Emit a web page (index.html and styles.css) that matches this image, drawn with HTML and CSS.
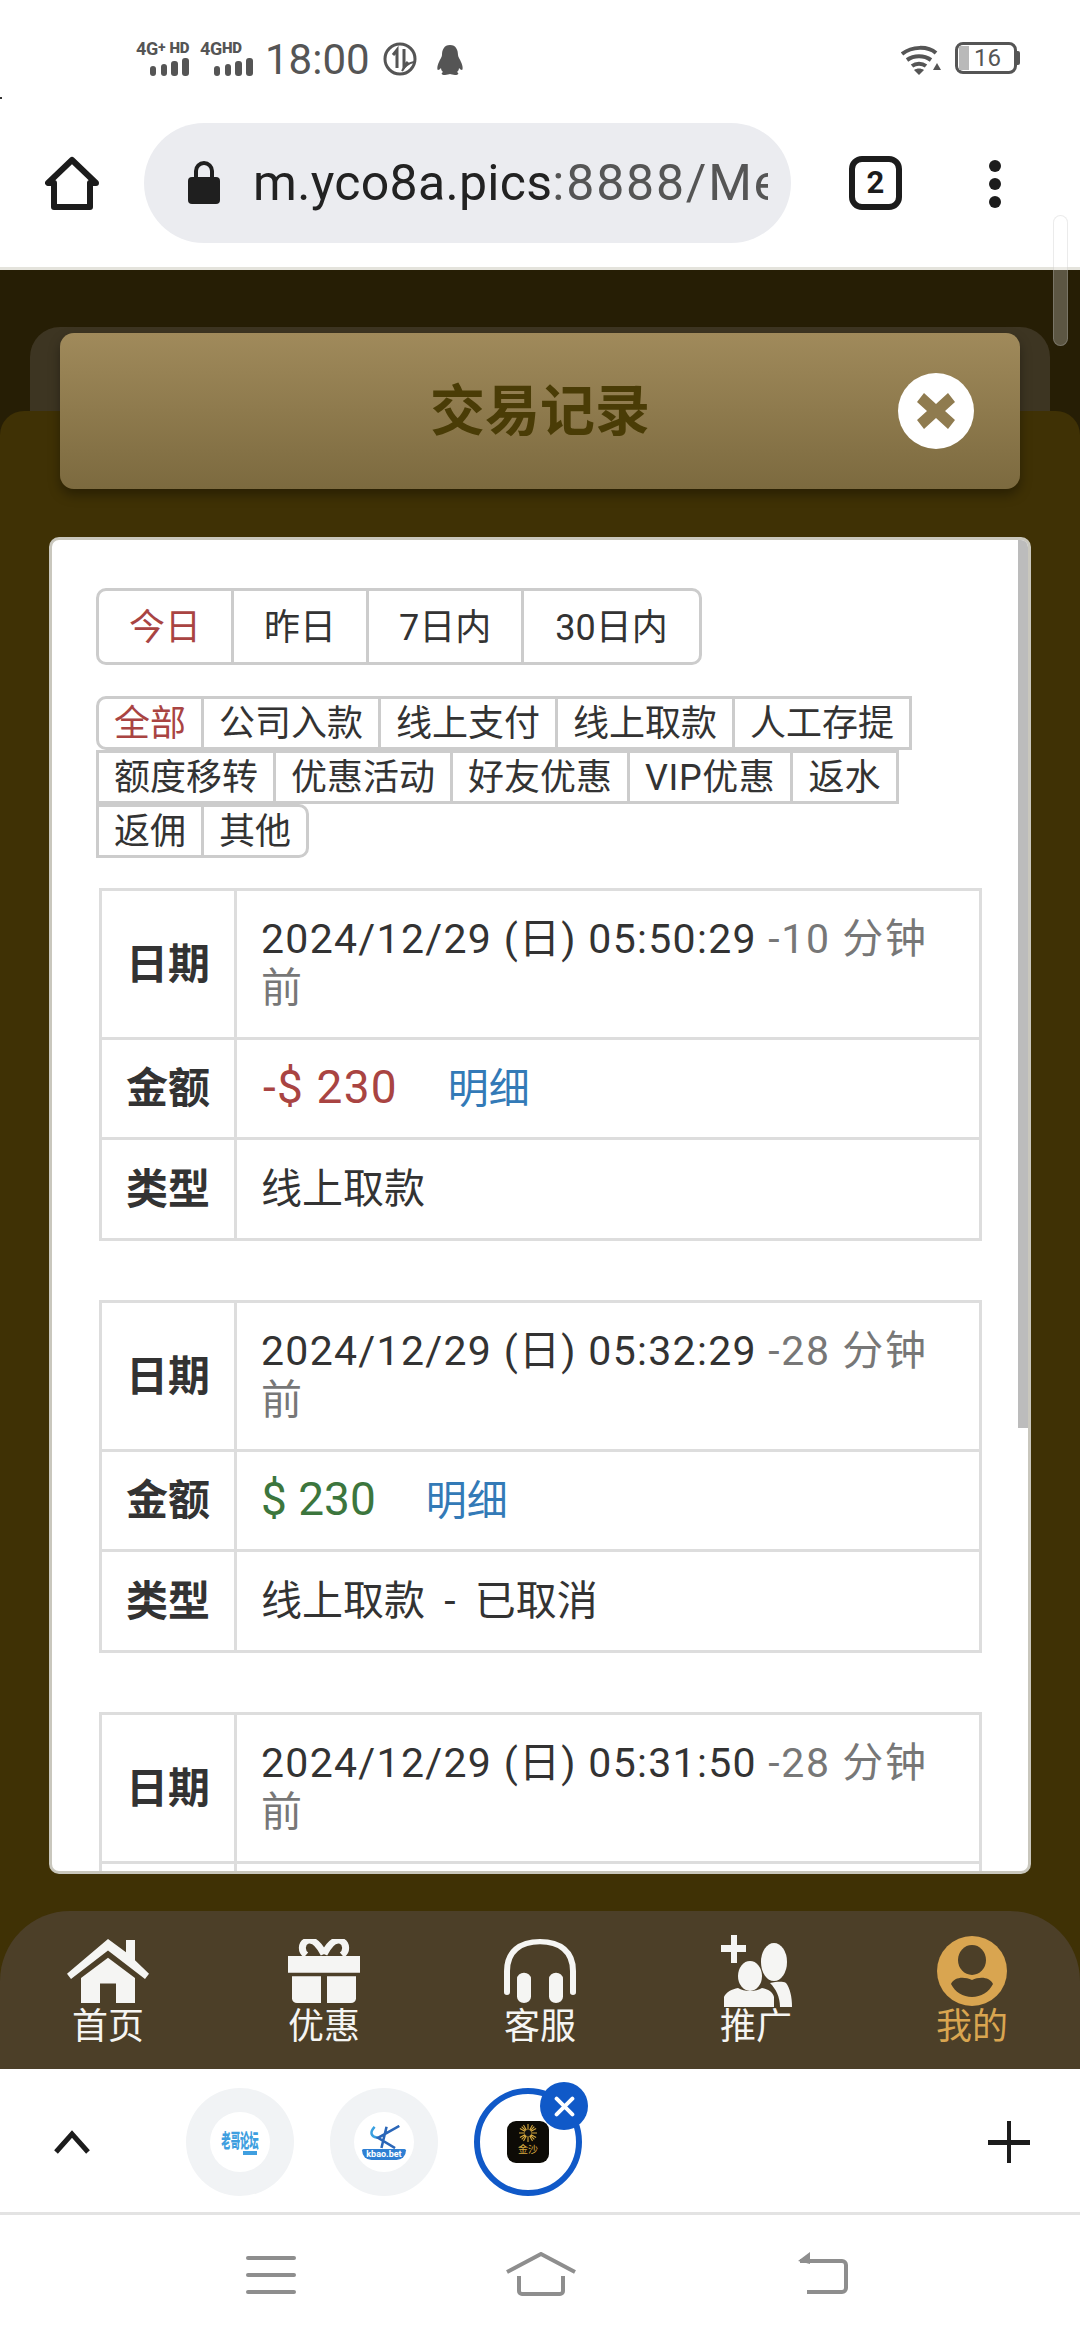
FILE: index.html
```html
<!DOCTYPE html>
<html lang="zh">
<head>
<meta charset="utf-8">
<title>交易记录</title>
<link rel="stylesheet" href="styles.css">
</head>
<body>
<div class="page">
  <header class="status">
    <div class="net"><span class="net-label">4G<sup>+</sup> <b>HD</b></span>
      <svg class="bars" viewBox="0 0 39 18"><rect x="0" y="8" width="6" height="10" rx="3"/><rect x="11" y="6" width="6" height="12" rx="3"/><rect x="21" y="3" width="7" height="15" rx="3"/><rect x="32" y="0" width="7" height="18" rx="3"/></svg></div>
    <div class="net net-two"><span class="net-label">4G<b>HD</b></span>
      <svg class="bars" viewBox="0 0 39 18"><rect x="0" y="8" width="6" height="10" rx="3"/><rect x="11" y="6" width="6" height="12" rx="3"/><rect x="21" y="3" width="7" height="15" rx="3"/><rect x="32" y="0" width="7" height="18" rx="3"/></svg></div>
    <span class="time">18:00</span>
    <svg class="st-data" viewBox="0 0 34 34" fill="none" stroke="#555"><circle cx="17" cy="17" r="15" stroke-width="3"/><path d="M10 13l4-5v18M21 7v18l4-5" stroke-width="3"/><path d="M19 29c3-6 7-8 12-9" stroke-width="2"/></svg>
    <svg class="st-qq" viewBox="0 0 28 30" fill="#555"><path d="M14 0c6 0 8 5 8 10 0 2 2 4 3 7 2 4 2 8 1 8-1 0-2-1-3-2 0 2-1 3-2 4 2 1 2 3-2 3-2 0-4-1-5-1s-3 1-5 1c-4 0-4-2-2-3-1-1-2-2-2-4-1 1-2 2-3 2-1 0-1-4 1-8 1-3 3-5 3-7C6 5 8 0 14 0z"/></svg>
    <span class="status-gap"></span>
    <svg class="st-wifi" viewBox="0 0 40 30" fill="none" stroke="#555" stroke-width="4"><path d="M1 9C11 1 27 1 35 8"/><path d="M6 15c7-5 17-5 24 0"/><path d="M11 21c4-3 10-3 14 0"/><path d="M18 30l-5-5c3-2 7-2 10 0z" fill="#555" stroke="none"/><path d="M40 25h-8l4-7z" fill="#555" stroke="none"/></svg>
    <div class="battery"><span class="battery-fill"></span><span class="battery-num">16</span></div>
    <span class="battery-nub"></span>
  </header>

  <nav class="toolbar">
    <svg class="tb-home" viewBox="0 0 54 54" fill="none" stroke="#1c1c1c" stroke-width="6" stroke-linejoin="round"><path d="M27 4L3 27h6v24h36V27h6z"/></svg>
    <div class="address">
      <svg class="lock" viewBox="0 0 32 44"><path d="M8 20V11a8 8 0 0 1 16 0v9" fill="none" stroke="#1f1f1f" stroke-width="4"/><rect y="17" width="32" height="27" rx="4" fill="#1f1f1f"/></svg>
      <div class="url"><span class="url-host">m.yco8a.pics</span>:8888/Me</div>
    </div>
    <div class="tab-count">2</div>
    <div class="dots"><span></span><span></span><span></span></div>
  </nav>

  <main class="stage">
    <div class="back-panel"></div>
    <div class="sheet">
      <div class="title-bar">
        <h1 class="title">交易记录</h1>
        <button class="close"><svg viewBox="0 0 40 40"><path d="M8 2l12 11L32 2l7 9-10 9 10 9-7 9-12-11L8 38l-7-9 10-9L1 11z" fill="#8f7b4f"/></svg></button>
      </div>

      <section class="card">
        <div class="card-scrollbar"></div>
        <div class="range-tabs">
          <a class="range-tab on">今日</a><a class="range-tab">昨日</a><a class="range-tab">7日内</a><a class="range-tab">30日内</a>
        </div>
        <div class="type-tabs">
          <a class="type-tab first on">全部</a><a class="type-tab">公司入款</a><a class="type-tab">线上支付</a><a class="type-tab">线上取款</a><a class="type-tab">人工存提</a><a class="type-tab">额度移转</a><a class="type-tab">优惠活动</a><a class="type-tab">好友优惠</a><a class="type-tab">VIP优惠</a><a class="type-tab">返水</a><a class="type-tab">返佣</a><a class="type-tab last">其他</a>
        </div>

        <table class="record">
          <tr class="r-date"><th>日期</th><td>2024/12/29 (日) 05:50:29 <span class="ago">-10 分钟前</span></td></tr>
          <tr class="r-amt"><th>金额</th><td><span class="neg">-$ 230</span><a class="detail">明细</a></td></tr>
          <tr class="r-type"><th>类型</th><td>线上取款</td></tr>
        </table>
        <table class="record">
          <tr class="r-date"><th>日期</th><td>2024/12/29 (日) 05:32:29 <span class="ago">-28 分钟前</span></td></tr>
          <tr class="r-amt"><th>金额</th><td><span class="pos">$ 230</span><a class="detail">明细</a></td></tr>
          <tr class="r-type"><th>类型</th><td>线上取款 - 已取消</td></tr>
        </table>
        <table class="record">
          <tr class="r-date"><th>日期</th><td>2024/12/29 (日) 05:31:50 <span class="ago">-28 分钟前</span></td></tr>
          <tr class="r-amt"><th></th><td></td></tr>
        </table>
      </section>

      <nav class="bottom-nav">
        <a class="nav-item">
          <svg class="nav-ico ico-wide" viewBox="0 0 82 72" preserveAspectRatio="none" fill="#f5f5f3"><path d="M41 0L59 15V1h9v23l14 15-4 6L41 13 4 45l-4-6z"/><path d="M14 44L41 21l27 23v28H49V50H33v22H14z"/></svg>
          <span>首页</span></a>
        <a class="nav-item">
          <svg class="nav-ico" viewBox="0 0 72 72" preserveAspectRatio="none" fill="#f5f5f3"><path d="M0 19h72v19H0z"/><path d="M4 42h29v30H9a5 5 0 0 1-5-5zM39 42h29v25a5 5 0 0 1-5 5H39z"/><path d="M36 17C30 4 24 0 19 2c-6 3-6 12-1 16M36 17C42 4 48 0 53 2c6 3 6 12 1 16" fill="none" stroke="#f5f5f3" stroke-width="7"/></svg>
          <span>优惠</span></a>
        <a class="nav-item">
          <svg class="nav-ico" viewBox="0 0 72 72" preserveAspectRatio="none" fill="#f5f5f3"><path d="M3 60V36C3 14 16 3 36 3s33 11 33 33v24" fill="none" stroke="#f5f5f3" stroke-width="6" stroke-linecap="round"/><rect x="13" y="38" width="14" height="34" rx="7"/><rect x="45" y="38" width="14" height="34" rx="7"/></svg>
          <span>客服</span></a>
        <a class="nav-item">
          <svg class="nav-ico ico-tall" viewBox="0 0 72 72" preserveAspectRatio="none" fill="#f5f5f3"><path d="M11 0h6v10h9v7h-9v11h-6V17H1v-7h10z"/><ellipse cx="30" cy="41" rx="12" ry="15"/><path d="M4 72V62c2-5 8-8 14-9 6 4 18 4 24 0 6 1 11 4 12 9v10z"/><ellipse cx="54" cy="27" rx="13" ry="19"/><path d="M50 48c6-1 12-2 16 0 4 5 6 14 6 24H60c0-10-4-18-10-24z"/></svg>
          <span>推广</span></a>
        <a class="nav-item active">
          <svg class="nav-ico ico-user" viewBox="0 0 70 70" preserveAspectRatio="none"><circle cx="35" cy="35" r="35" fill="#d9a550"/><ellipse cx="35" cy="24" rx="14" ry="15" fill="#4c3f28"/><path d="M14 48c3-7 13-8 21-4 8-4 18-3 21 4-4 8-12 13-21 13s-17-5-21-13z" fill="#4c3f28"/></svg>
          <span>我的</span></a>
      </nav>
    </div>
  </main>

  <div class="tabstrip">
    <svg class="chev" viewBox="0 0 36 24" fill="none" stroke="#1c1c1c" stroke-width="5"><path d="M2 22L18 4l16 18"/></svg>
    <div class="bubbles">
      <div class="bubble"><div class="favicon"><span class="laoge">老哥论坛</span><span class="laoge-tag"></span></div></div>
      <div class="bubble"><div class="favicon">
        <svg class="k-mark" viewBox="0 0 40 28" fill="none" stroke="#2a66b8" stroke-width="3"><path d="M9 2C3 8 4 14 13 15" stroke="#3aa0e0"/><path d="M17 27L23 2M38 1L13 15l20 12"/></svg>
        <span class="k-name">kbao.bet</span></div></div>
      <div class="bubble current"><div class="gold-logo">
        <svg class="sun" viewBox="0 0 20 20" stroke="#d6a93f" stroke-width="1.2"><path d="M10 0v20M0 10h20M3 3l14 14M17 3L3 17M5 1l10 18M15 1L5 19M1 5l18 10M19 5L1 15"/><circle cx="10" cy="10" r="3.5" fill="#111" stroke="none"/></svg>
        <span class="gold-name">金沙</span></div>
        <span class="bubble-x"><svg viewBox="0 0 24 24" fill="none" stroke="#fff" stroke-width="4.5" stroke-linecap="round"><path d="M3 3l18 18M21 3L3 21"/></svg></span>
      </div>
    </div>
    <svg class="plus" viewBox="0 0 42 42" fill="#1c1c1c"><path d="M19 0h4v19h19v5H23v18h-4V24H0v-5h19z"/></svg>
  </div>

  <footer class="gesture">
    <svg class="g-menu" viewBox="0 0 50 38" fill="#8e8e8e"><rect width="50" height="4" rx="2"/><rect y="17" width="50" height="4" rx="2"/><rect y="34" width="50" height="4" rx="2"/></svg>
    <svg class="g-home" viewBox="0 0 70 44" fill="none" stroke="#8e8e8e" stroke-width="4"><path d="M1 20L35 2l34 18M13 24v15a3 3 0 0 0 3 3h38a3 3 0 0 0 3-3V24"/></svg>
    <svg class="g-back" viewBox="0 0 50 42" fill="none" stroke="#8e8e8e" stroke-width="4"><path d="M2 9h42a4 4 0 0 1 4 4v23a4 4 0 0 1-4 4H9"/><path d="M0 9l12-9v12z" fill="#8e8e8e" stroke="none"/></svg>
  </footer>
</div>
</body>
</html>
```

FILE: styles.css
```css
* { box-sizing: border-box; }
html, body { margin: 0; padding: 0; background: #fff; }
body { font-family: Roboto, "Noto Sans CJK SC", sans-serif; color: #333; }
.page { width: 1080px; height: 2340px; display: flex; flex-direction: column; overflow: hidden; }

/* status bar */
.status { height: 105px; padding: 42px 60px 0 136px; display: flex; align-items: flex-start; flex: none; }
.net { width: 64px; display: flex; flex-direction: column; align-items: flex-end; padding-right: 11px; }
.net-two { width: 64px; padding-right: 11px; }
.net-label { font: 700 18px/13px Roboto, sans-serif; color: #555; white-space: nowrap; align-self: flex-start; height: 16px; letter-spacing: -.3px; }
.net-label sup { font-size: 14px; line-height: 0; vertical-align: 3px; }
.net-label b { font-size: 15px; vertical-align: 2px; }
.bars { width: 39px; height: 18px; fill: #555; }
.time { font: 400 42px/34px Roboto, sans-serif; color: #555; margin: 1px 0 0 1px; }
.st-data { width: 34px; height: 34px; margin-left: 13px; }
.st-qq { width: 28px; height: 30px; margin: 3px 0 0 19px; }
.status-gap { flex: 1; }
.st-wifi { width: 40px; height: 30px; margin: 3px 14px 0 0; }
.battery { width: 62px; height: 32px; border: 3px solid #555; border-radius: 8px; display: flex; align-items: center; position: relative; padding-left: 16px; }
.battery-fill { position: absolute; left: 1px; top: 1px; bottom: 1px; width: 10px; background: #b9b9b9; }
.battery-num { font: 400 24px/1 Roboto, sans-serif; color: #555; }
.battery-nub { width: 3px; height: 14px; background: #555; margin-top: 9px; border-radius: 0 2px 2px 0; }

/* browser toolbar */
.toolbar { height: 165px; flex: none; border-bottom: 3px solid #e4e3dc; padding: 18px 0 0 45px; display: flex; align-items: flex-start; position: relative; }
.toolbar::before { content: ""; position: absolute; left: 0; top: -8px; width: 2px; height: 2px; background: #333; }
.tb-home { width: 54px; height: 54px; margin-top: 33px; flex: none; }
.address { width: 647px; height: 120px; margin-left: 45px; border-radius: 60px; background: #ebecf0; display: flex; align-items: center; padding: 0 23px 0 44px; flex: none; }
.lock { width: 32px; height: 44px; flex: none; margin-top: -2px; }
.url { margin-left: 33px; font: 400 50px/60px Roboto, sans-serif; letter-spacing: 1.8px; color: #555; white-space: nowrap; overflow: hidden; flex: 1; min-width: 0; }
.url-host { color: #222; letter-spacing: .3px; }
.tab-count { width: 53px; height: 54px; margin: 33px 0 0 58px; border: 6px solid #1c1c1c; border-radius: 13px; font: 700 31px/42px Roboto, sans-serif; color: #1c1c1c; text-align: center; flex: none; }
.dots { display: flex; flex-direction: column; gap: 6px; margin: 37px 0 0 87px; flex: none; }
.dots span { width: 12px; height: 12px; border-radius: 50%; background: #1c1c1c; }

/* page stage */
.stage { height: 1799px; flex: none; background: #261e05; padding-top: 57px; display: flex; flex-direction: column; position: relative; }
.stage::after { content: ""; position: absolute; right: 12px; top: -55px; width: 15px; height: 131px; border-radius: 8px; background: rgba(255, 255, 255, .25); box-shadow: inset 0 0 0 1px rgba(190, 190, 190, .3); }
.back-panel { height: 84px; margin: 0 30px; background: #3d3522; border-radius: 30px 30px 0 0; flex: none; }
.sheet { flex: 1; min-height: 0; background: #3f3105; border-radius: 24px 24px 0 0; display: flex; flex-direction: column; }
.title-bar { height: 156px; margin: -78px 60px 0; padding-bottom: 10px; border-radius: 14px; background: linear-gradient(#a08a5b, #7c6a3f); box-shadow: 0 6px 12px rgba(0, 0, 0, .35); display: flex; align-items: center; justify-content: center; position: relative; flex: none; }
.title { margin: 0; font: 700 55px/1 "Noto Sans CJK SC", sans-serif; color: #4a3c06; }
.close { position: absolute; right: 46px; top: 40px; width: 76px; height: 76px; border: 0; padding: 0 18px; border-radius: 50%; background: #fff; display: flex; align-items: center; }
.close svg { width: 40px; height: 40px; }

/* white card */
.card { height: 1337px; margin: 48px 49px 0; background: #fff; border: 3px solid #c9c7bd; border-radius: 10px; padding: 48px 0 0 44px; overflow: hidden; position: relative; flex: none; }
.card-scrollbar { position: absolute; right: 0; top: 0; width: 10px; height: 888px; background: #bcbcbc; }
.range-tabs { display: flex; width: max-content; }
.range-tab { height: 77px; padding: 0 30px; font-size: 36px; line-height: 74px; border: 3px solid #ccc; margin-left: -3px; color: #333; }
.range-tab:first-child { margin-left: 0; border-radius: 10px 0 0 10px; }
.range-tab:last-child { padding: 0 31px; border-radius: 0 10px 10px 0; }
.range-tab.on, .type-tab.on { color: #a94442; }
.type-tabs { display: flex; flex-wrap: wrap; width: 882px; margin: 31px 0 30px; }
.type-tab { height: 54px; padding: 0 15px; font-size: 36px; line-height: 50px; border: 3px solid #ccc; margin: 0 0 0 -3px; color: #333; }
.type-tab:nth-child(1), .type-tab:nth-child(6), .type-tab:nth-child(11) { margin-left: 0; }
.type-tab:nth-child(9) { letter-spacing: .6px; }
.type-tab.first { border-radius: 10px 0 0 10px; }
.type-tab.last { border-radius: 0 10px 10px 0; }

/* records */
.record { width: 883px; margin: 0 0 59px 3px; border-collapse: collapse; table-layout: fixed; font-size: 41px; line-height: 49px; }
.record th, .record td { border: 3px solid #ddd; padding: 0 24px; }
.record th { width: 135px; padding: 0; text-align: center; font-weight: 700; font-size: 42px; }
.r-date { height: 149px; letter-spacing: 1.3px; }
.r-date th { letter-spacing: 0; }
.r-amt { height: 100px; }
.r-type { height: 101px; word-spacing: 9px; }
.ago { color: #777; letter-spacing: 1.6px; }
.neg, .pos { font-size: 46px; }
.neg { color: #a94442; letter-spacing: 1.2px; margin-left: 2px; }
.pos { color: #3c763d; }
.detail { color: #337ab7; margin-left: 50px; font-size: 41px; }

/* bottom nav */
.bottom-nav { height: 158px; margin-top: auto; background: #4c3f28; border-radius: 70px 70px 0 0; display: flex; padding: 24px 0 0; flex: none; }
.nav-item { width: 216px; display: flex; flex-direction: column; align-items: center; color: #f5f5f3; font-size: 36px; line-height: 40px; }
.nav-ico { width: 72px; height: 64px; margin: 4px 0; flex: none; }
.ico-wide { width: 82px; }
.ico-tall { height: 72px; margin: 0; }
.ico-user { width: 70px; height: 70px; margin: 1px 0; }
.active { color: #d9a550; }

/* browser tab strip */
.tabstrip { height: 146px; flex: none; background: #fff; display: flex; align-items: center; border-bottom: 3px solid #e3e3e3; padding: 3px 50px 0 54px; }
.chev { width: 36px; height: 24px; flex: none; }
.bubbles { display: flex; gap: 36px; margin-left: 96px; flex: 1; }
.bubble { width: 108px; height: 108px; border-radius: 50%; background: #f1f3f5; display: flex; align-items: center; justify-content: center; position: relative; }
.favicon { width: 60px; height: 60px; border-radius: 50%; background: #fff; display: flex; flex-direction: column; align-items: center; justify-content: center; overflow: hidden; }
.laoge { font: 900 13px/20px "Noto Sans CJK SC", sans-serif; color: #3f9fe0; white-space: nowrap; transform: scale(.72, 1.5); }
.laoge-tag { width: 14px; height: 4px; background: #3f9fe0; align-self: flex-end; margin: 1px 13px 0 0; }
.k-mark { width: 34px; height: 24px; flex: none; }
.k-name { font: 700 9px/11px Roboto, sans-serif; color: #fff; background: #2f7fd3; border-radius: 2px 2px 12px 12px; padding: 0 4px; }
.current { background: #fff; border: 6px solid #1059c8; }
.gold-logo { width: 42px; height: 42px; background: #0d0b06; border-radius: 9px; display: flex; flex-direction: column; align-items: center; }
.sun { width: 18px; height: 18px; margin-top: 3px; flex: none; }
.gold-name { font: 400 10px/14px "Noto Sans CJK SC", sans-serif; color: #d6a93f; }
.bubble-x { position: absolute; right: -12px; top: -12px; width: 48px; height: 48px; border-radius: 50%; background: #1059c8; display: flex; align-items: center; justify-content: center; }
.bubble-x svg { width: 21px; height: 21px; }
.plus { width: 42px; height: 42px; flex: none; }

/* gesture bar */
.gesture { flex: 1; background: #fff; display: flex; align-items: flex-start; padding: 41px 0 0 246px; }
.g-menu { width: 50px; height: 38px; flex: none; }
.g-home { width: 70px; height: 44px; margin: -4px 0 0 210px; flex: none; }
.g-back { width: 50px; height: 42px; margin: -4px 0 0 222px; flex: none; }
```
